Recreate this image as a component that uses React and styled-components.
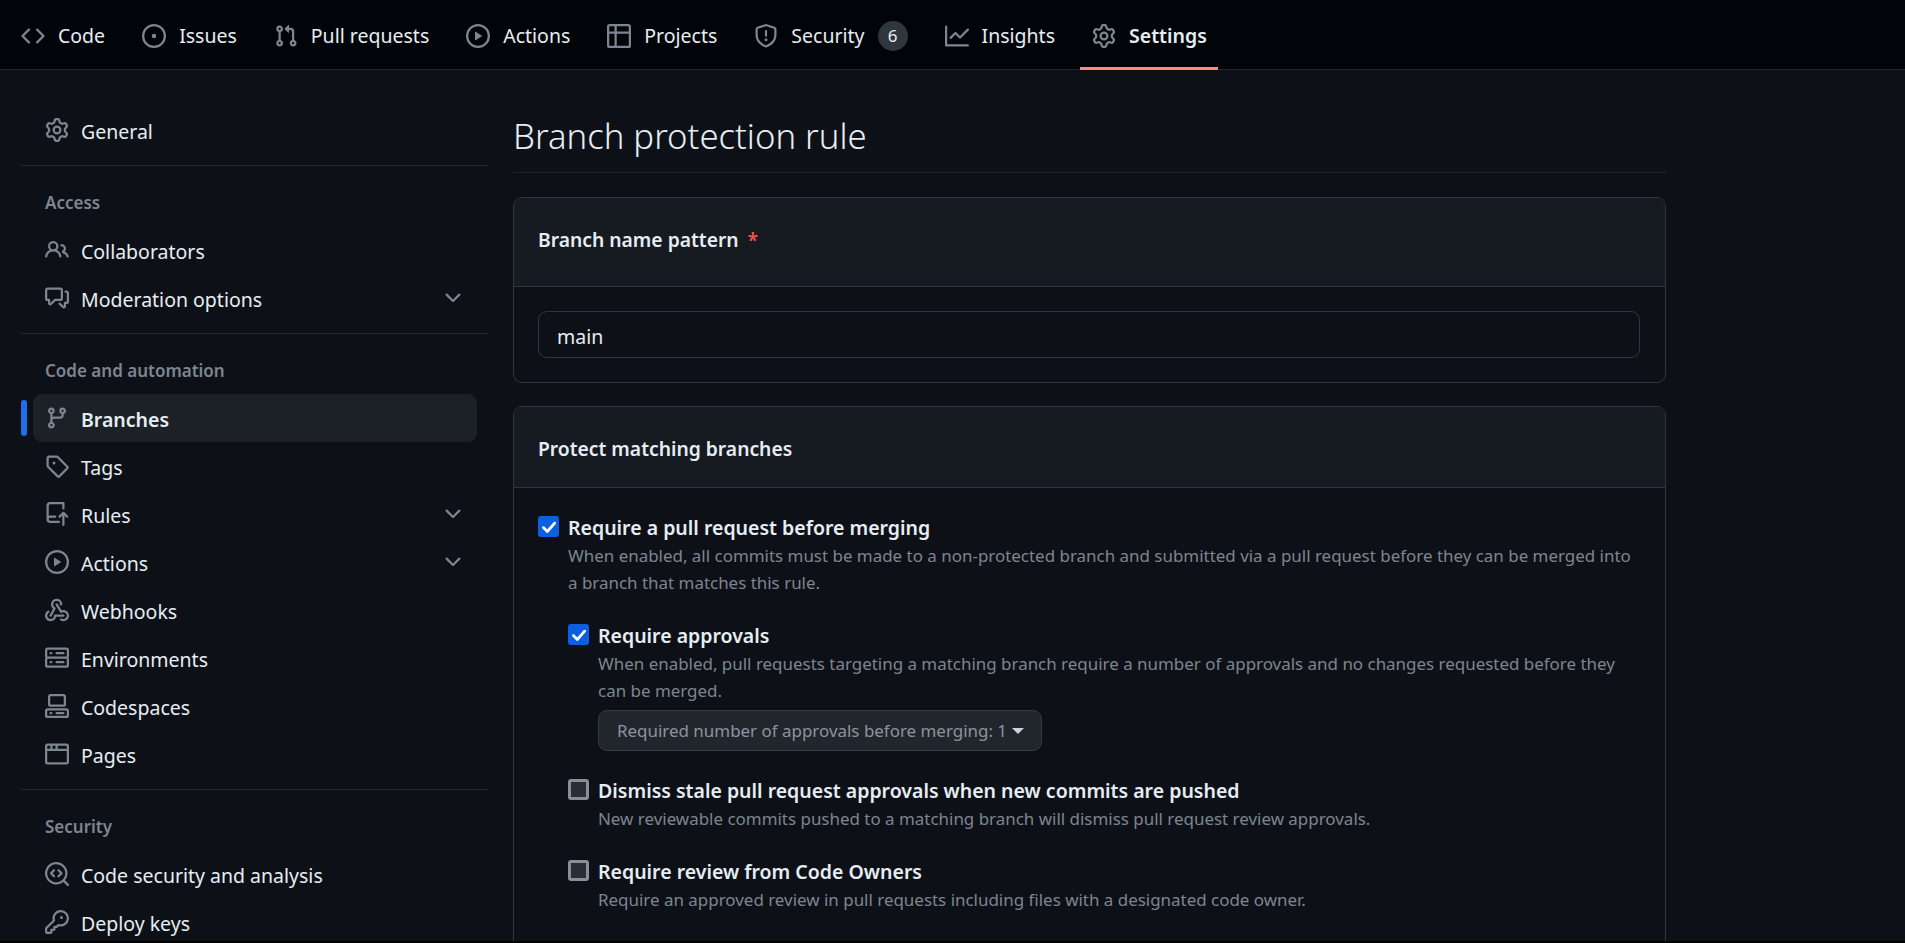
import React from 'react';
import styled, { createGlobalStyle } from 'styled-components';

const GlobalStyle = createGlobalStyle`
  html, body {
    margin: 0;
    height: 100%;
    overflow: hidden;
    background: #0d1117;
  }
  body {
    color: #e6edf3;
    font-family: "Noto Sans", "Open Sans", sans-serif;
    font-size: 19.5px;
  }
  * { box-sizing: border-box; }
`;

const Page = styled.div`
  height: 943px;
  overflow: hidden;
  border-bottom: 2px solid #000;
`;

const TabBar = styled.nav`
  display: flex;
  align-items: stretch;
  gap: 13px;
  height: 70px;
  padding-left: 9px;
  background: #010409;
  border-bottom: 1px solid #21262d;
`;

const Tab = styled.a`
  position: relative;
  display: flex;
  align-items: center;
  gap: 13px;
  padding: 2px 12px 0;
  font-weight: ${p => (p.$active ? 600 : 400)};
  color: #e6edf3;
  white-space: nowrap;
  svg { color: #7d8590; flex: none; }
  ${p => p.$active && `
    &::after {
      content: '';
      position: absolute;
      left: 0;
      right: 1px;
      bottom: -1px;
      height: 3px;
      background: #fd8c73;
    }
  `}
`;

const Counter = styled.span`
  display: flex;
  align-items: center;
  justify-content: center;
  width: 30px;
  height: 30px;
  border-radius: 15px;
  background: #30363d;
  font-size: 17px;
`;

const Layout = styled.div`
  display: flex;
  align-items: flex-start;
`;

const Sidebar = styled.aside`
  flex: none;
  width: 489px;
  padding: 36px 0 0 21px;
`;

const SideGroup = styled.ul`
  list-style: none;
  margin: 0;
  padding: 0 12px;
`;

const SideRow = styled.li`
  position: relative;
  display: flex;
  align-items: center;
  gap: 12px;
  height: 48px;
  padding: 0 12px;
  border-radius: 9px;
  color: #e6edf3;
  background: ${p => (p.$active ? '#1c2128' : 'transparent')};
  font-weight: ${p => (p.$active ? 600 : 400)};
  svg { color: #7d8590; flex: none; }
  ${p => p.$active && `
    &::before {
      content: '';
      position: absolute;
      left: -12px;
      top: 6px;
      width: 6px;
      height: 36px;
      border-radius: 9px;
      background: #1f6feb;
    }
  `}
`;

const RowLabel = styled.span`
  flex: 1;
  padding-top: 2px;
`;

const Divider = styled.hr`
  height: 1px;
  margin: 11px 0 0;
  border: 0;
  background: #21262d;
`;

const GroupTitle = styled.h3`
  margin: 0;
  height: 60px;
  padding: 25px 0 0 24px;
  font-size: 17px;
  line-height: 24px;
  font-weight: 600;
  color: #7d8590;
`;

const Main = styled.main`
  flex: none;
  width: 1153px;
  margin-left: 24px;
`;

const Heading = styled.div`
  height: 103px;
  padding-top: 39px;
  border-bottom: 1px solid #21262d;
`;

const Title = styled.h1`
  margin: 0;
  font-size: 34.7px;
  line-height: 54px;
  font-weight: 300;
  color: #e6edf3;
`;

const Panel = styled.section`
  margin-top: ${p => p.$top}px;
  border: 1px solid #30363d;
  border-radius: 9px;
  overflow: hidden;
`;

const PanelHead = styled.header`
  display: flex;
  align-items: center;
  gap: 9px;
  height: ${p => p.$height}px;
  padding: ${p => p.$pushDown}px 24px ${p => p.$pushUp}px;
  background: #161b22;
  border-bottom: 1px solid #30363d;
  font-size: 19.3px;
  font-weight: 600;
`;

const Required = styled.span`
  color: #f85149;
`;

const PanelBody = styled.div`
  padding: ${p => p.$top}px 25px ${p => p.$bottom}px 24px;
`;

const TextBox = styled.div`
  display: flex;
  align-items: center;
  height: 47px;
  padding: 3px 18px 0;
  border: 1px solid #30363d;
  border-radius: 9px;
  background: #0d1117;
`;

const Option = styled.div`
  display: grid;
  grid-template-columns: 21px 1fr;
  column-gap: 9px;
  margin: ${p => p.$top || 0}px 0 0 ${p => (p.$nested ? 30 : 0)}px;
`;

const Box = styled.span`
  display: flex;
  align-items: center;
  justify-content: center;
  width: 21px;
  height: 21px;
  border-radius: 3px;
  border: ${p => (p.$checked ? '0' : '3px solid #8b8d98')};
  background: ${p => (p.$checked ? '#0c5fe0' : '#2b2c34')};
  color: #fff;
`;

const OptionLabel = styled.div`
  height: 25px;
  font-weight: 600;
  line-height: 24px;
`;

const OptionHelp = styled.p`
  margin: 1px 0 2px;
  font-size: 16.95px;
  line-height: 27px;
  color: #7d8590;
`;

const SelectButton = styled.div`
  display: flex;
  align-items: center;
  gap: 5px;
  width: fit-content;
  height: 41px;
  margin-top: 6px;
  padding: 0 17px 0 18px;
  border: 1px solid #363b42;
  border-radius: 9px;
  background: #21262d;
  font-size: 16.95px;
  color: #8b949e;
  white-space: nowrap;
`;

const Caret = styled.span`
  width: 0;
  height: 0;
  border-left: 6px solid transparent;
  border-right: 6px solid transparent;
  border-top: 6px solid #c9d1d9;
`;

const paths = {
  code: ['m11.28 3.22 4.25 4.25a.75.75 0 0 1 0 1.06l-4.25 4.25a.749.749 0 0 1-1.275-.326.749.749 0 0 1 .215-.734L13.94 8l-3.72-3.72a.749.749 0 0 1 .326-1.275.749.749 0 0 1 .734.215Zm-6.56 0a.751.751 0 0 1 1.042.018.751.751 0 0 1 .018 1.042L2.06 8l3.72 3.72a.749.749 0 0 1-.326 1.275.749.749 0 0 1-.734-.215L.47 8.53a.75.75 0 0 1 0-1.06Z'],
  issue: ['M8 9.5a1.5 1.5 0 1 0 0-3 1.5 1.5 0 0 0 0 3Z', 'M8 0a8 8 0 1 1 0 16A8 8 0 0 1 8 0ZM1.5 8a6.5 6.5 0 1 0 13 0 6.5 6.5 0 0 0-13 0Z'],
  pull: ['M1.5 3.25a2.25 2.25 0 1 1 3 2.122v5.256a2.251 2.251 0 1 1-1.5 0V5.372A2.25 2.25 0 0 1 1.5 3.25Zm5.677-.177L9.573.677A.25.25 0 0 1 10 .854V2.5h1A2.5 2.5 0 0 1 13.5 5v5.628a2.251 2.251 0 1 1-1.5 0V5a1 1 0 0 0-1-1h-1v1.646a.25.25 0 0 1-.427.177L7.177 3.427a.25.25 0 0 1 0-.354ZM3.75 2.5a.75.75 0 1 0 0 1.5.75.75 0 0 0 0-1.5Zm0 9.5a.75.75 0 1 0 0 1.5.75.75 0 0 0 0-1.5Zm8.25.75a.75.75 0 1 0 1.5 0 .75.75 0 0 0-1.5 0Z'],
  play: ['M8 0a8 8 0 1 1 0 16A8 8 0 0 1 8 0ZM1.5 8a6.5 6.5 0 1 0 13 0 6.5 6.5 0 0 0-13 0Zm4.879-2.773 4.264 2.559a.25.25 0 0 1 0 .428l-4.264 2.559A.25.25 0 0 1 6 10.559V5.442a.25.25 0 0 1 .379-.215Z'],
  table: ['M0 1.75C0 .784.784 0 1.75 0h12.5C15.216 0 16 .784 16 1.75v12.5A1.75 1.75 0 0 1 14.25 16H1.75A1.75 1.75 0 0 1 0 14.25ZM6.5 6.5v8h7.75a.25.25 0 0 0 .25-.25V6.5Zm8-1.5V1.75a.25.25 0 0 0-.25-.25H6.5V5Zm-13 1.5v7.75c0 .138.112.25.25.25H5v-8ZM5 5V1.5H1.75a.25.25 0 0 0-.25.25V5Z'],
  shield: ['M7.467.133a1.748 1.748 0 0 1 1.066 0l5.25 1.68A1.75 1.75 0 0 1 15 3.48V7c0 1.566-.32 3.182-1.303 4.682-.983 1.498-2.585 2.813-5.032 3.855a1.697 1.697 0 0 1-1.33 0c-2.447-1.042-4.049-2.357-5.032-3.855C1.32 10.182 1 8.566 1 7V3.48a1.75 1.75 0 0 1 1.217-1.667Zm.61 1.429a.25.25 0 0 0-.153 0l-5.25 1.68a.25.25 0 0 0-.174.238V7c0 1.358.275 2.666 1.057 3.86.784 1.194 2.121 2.34 4.366 3.297a.196.196 0 0 0 .154 0c2.245-.956 3.582-2.104 4.366-3.298C13.225 9.666 13.5 8.36 13.5 7V3.48a.251.251 0 0 0-.174-.237l-5.25-1.68ZM8.75 4.75v3a.75.75 0 0 1-1.5 0v-3a.75.75 0 0 1 1.5 0ZM9 10.5a1 1 0 1 1-2 0 1 1 0 0 1 2 0Z'],
  graph: ['M1.5 1.75V13.5h13.75a.75.75 0 0 1 0 1.5H.75a.75.75 0 0 1-.75-.75V1.75a.75.75 0 0 1 1.5 0Zm14.28 2.53-5.25 5.25a.75.75 0 0 1-1.06 0L7 7.06 4.28 9.78a.751.751 0 0 1-1.042-.018.751.751 0 0 1-.018-1.042l3.25-3.25a.75.75 0 0 1 1.06 0L10 7.94l4.72-4.72a.751.751 0 0 1 1.042.018.751.751 0 0 1 .018 1.042Z'],
  gear: ['M8 0a8.2 8.2 0 0 1 .701.031C9.444.095 9.99.645 10.16 1.29l.288 1.107c.018.066.079.158.212.224.231.114.454.243.668.386.123.082.233.09.299.071l1.103-.303c.644-.176 1.392.021 1.82.63.27.385.506.792.704 1.218.315.675.111 1.422-.364 1.891l-.814.806c-.049.048-.098.147-.088.294.016.257.016.515 0 .772-.01.147.038.246.088.294l.814.806c.475.469.679 1.216.364 1.891a7.977 7.977 0 0 1-.704 1.217c-.428.61-1.176.807-1.82.63l-1.102-.302c-.067-.019-.177-.011-.3.071a5.909 5.909 0 0 1-.668.386c-.133.066-.194.158-.211.224l-.29 1.106c-.168.646-.715 1.196-1.458 1.26a8.006 8.006 0 0 1-1.402 0c-.743-.064-1.289-.614-1.458-1.26l-.289-1.106c-.018-.066-.079-.158-.212-.224a5.738 5.738 0 0 1-.668-.386c-.123-.082-.233-.09-.299-.071l-1.103.303c-.644.176-1.392-.021-1.82-.63a8.12 8.12 0 0 1-.704-1.218c-.315-.675-.111-1.422.363-1.891l.815-.806c.05-.048.098-.147.088-.294a6.214 6.214 0 0 1 0-.772c.01-.147-.038-.246-.088-.294l-.815-.806C.635 6.045.431 5.298.746 4.623a7.92 7.92 0 0 1 .704-1.217c.428-.61 1.176-.807 1.82-.63l1.102.302c.067.019.177.011.3-.071.214-.143.437-.272.668-.386.133-.066.194-.158.211-.224l.29-1.106C6.009.645 6.556.095 7.299.03 7.53.01 7.764 0 8 0Zm-.571 1.525c-.036.003-.108.036-.137.146l-.289 1.105c-.147.561-.549.967-.998 1.189-.173.086-.34.183-.5.29-.417.278-.97.423-1.529.27l-1.103-.303c-.109-.03-.175.016-.195.045-.22.312-.412.644-.573.99-.014.031-.021.11.059.19l.815.806c.411.406.562.957.53 1.456a4.709 4.709 0 0 0 0 .582c.032.499-.119 1.05-.53 1.456l-.815.806c-.081.08-.073.159-.059.19.162.346.353.677.573.989.02.03.085.076.195.046l1.102-.303c.56-.153 1.113-.008 1.53.27.161.107.328.204.501.29.447.222.85.629.997 1.189l.289 1.105c.029.109.101.143.137.146a6.6 6.6 0 0 0 1.142 0c.036-.003.108-.036.137-.146l.289-1.105c.147-.561.549-.967.998-1.189.173-.086.34-.183.5-.29.417-.278.97-.423 1.529-.27l1.103.303c.109.029.175-.016.195-.045.22-.313.411-.644.573-.99.014-.031.021-.11-.059-.19l-.815-.806c-.411-.406-.562-.957-.53-1.456a4.709 4.709 0 0 0 0-.582c-.032-.499.119-1.05.53-1.456l.815-.806c.081-.08.073-.159.059-.19a6.464 6.464 0 0 0-.573-.989c-.02-.03-.085-.076-.195-.046l-1.102.303c-.56.153-1.113.008-1.53-.27a4.44 4.44 0 0 0-.501-.29c-.447-.222-.85-.629-.997-1.189l-.289-1.105c-.029-.11-.101-.143-.137-.146a6.6 6.6 0 0 0-1.142 0ZM11 8a3 3 0 1 1-6 0 3 3 0 0 1 6 0ZM9.5 8a1.5 1.5 0 1 0-3.001.001A1.5 1.5 0 0 0 9.5 8Z'],
  people: ['M2 5.5a3.5 3.5 0 1 1 5.898 2.549 5.508 5.508 0 0 1 3.034 4.084.75.75 0 1 1-1.482.235 4 4 0 0 0-7.9 0 .75.75 0 0 1-1.482-.236A5.507 5.507 0 0 1 3.102 8.05 3.493 3.493 0 0 1 2 5.5ZM11 4a3.001 3.001 0 0 1 2.22 5.018 5.01 5.01 0 0 1 2.56 3.012.749.749 0 0 1-.885.954.752.752 0 0 1-.549-.514 3.507 3.507 0 0 0-2.522-2.372.75.75 0 0 1-.574-.73v-.352a.75.75 0 0 1 .416-.672A1.5 1.5 0 0 0 11 5.5.75.75 0 0 1 11 4Zm-5.5-.5a2 2 0 1 0-.001 3.999A2 2 0 0 0 5.5 3.5Z'],
  discussion: ['M1.75 1h8.5c.966 0 1.75.784 1.75 1.75v5.5A1.75 1.75 0 0 1 10.25 10H7.061l-2.574 2.573A1.458 1.458 0 0 1 2 11.543V10h-.25A1.75 1.75 0 0 1 0 8.25v-5.5C0 1.784.784 1 1.75 1ZM1.5 2.75v5.5c0 .138.112.25.25.25h1a.75.75 0 0 1 .75.75v2.19l2.72-2.72a.749.749 0 0 1 .53-.22h3.5a.25.25 0 0 0 .25-.25v-5.5a.25.25 0 0 0-.25-.25h-8.5a.25.25 0 0 0-.25.25Zm13 2a.25.25 0 0 0-.25-.25h-.5a.75.75 0 0 1 0-1.5h.5c.966 0 1.75.784 1.75 1.75v5.5A1.75 1.75 0 0 1 14.25 12H14v1.543a1.458 1.458 0 0 1-2.487 1.03L9.22 12.28a.749.749 0 0 1 .326-1.275.749.749 0 0 1 .734.215l2.22 2.22v-2.19a.75.75 0 0 1 .75-.75h1a.25.25 0 0 0 .25-.25Z'],
  branch: ['M9.5 3.25a2.25 2.25 0 1 1 3 2.122V6A2.5 2.5 0 0 1 10 8.5H6a1 1 0 0 0-1 1v1.128a2.251 2.251 0 1 1-1.5 0V5.372a2.25 2.25 0 1 1 1.5 0v1.836A2.493 2.493 0 0 1 6 7h4a1 1 0 0 0 1-1v-.628A2.25 2.25 0 0 1 9.5 3.25Zm-6 0a.75.75 0 1 0 1.5 0 .75.75 0 0 0-1.5 0Zm8.25-.75a.75.75 0 1 0 0 1.5.75.75 0 0 0 0-1.5ZM4.25 12a.75.75 0 1 0 0 1.5.75.75 0 0 0 0-1.5Z'],
  tag: ['M1 7.775V2.75C1 1.784 1.784 1 2.75 1h5.025c.464 0 .91.184 1.238.513l6.25 6.25a1.75 1.75 0 0 1 0 2.474l-5.026 5.026a1.75 1.75 0 0 1-2.474 0l-6.25-6.25A1.752 1.752 0 0 1 1 7.775Zm1.5 0c0 .066.026.13.073.177l6.25 6.25a.25.25 0 0 0 .354 0l5.025-5.025a.25.25 0 0 0 0-.354l-6.25-6.25a.25.25 0 0 0-.177-.073H2.75a.25.25 0 0 0-.25.25ZM6 5a1 1 0 1 1 0 2 1 1 0 0 1 0-2Z'],
  repoPush: ['M1 2.5A2.5 2.5 0 0 1 3.5 0h8.75a.75.75 0 0 1 .75.75v3.5a.75.75 0 0 1-1.5 0V1.5h-8a1 1 0 0 0-1 1v6.708A2.493 2.493 0 0 1 3.5 9h3.25a.75.75 0 0 1 0 1.5H3.5a1 1 0 0 0 0 2h5.75a.75.75 0 0 1 0 1.5H3.5A2.5 2.5 0 0 1 1 11.5Zm13.23 7.79h-.001l-1.224-1.224v6.184a.75.75 0 0 1-1.5 0V9.066L10.28 10.29a.75.75 0 0 1-1.06-1.061l2.505-2.504a.75.75 0 0 1 1.06 0L15.29 9.23a.751.751 0 0 1-.018 1.042.751.751 0 0 1-1.042.018Z'],
  webhook: ['M5.5 4.25a2.25 2.25 0 0 1 4.5 0 .75.75 0 0 0 1.5 0 3.75 3.75 0 1 0-6.14 2.889l-2.272 4.258a.75.75 0 0 0 1.324.706L7 7.25a.75.75 0 0 0-.309-1.015A2.25 2.25 0 0 1 5.5 4.25Z', 'M7.364 3.607a.75.75 0 0 1 1.03.257l2.608 4.349a3.75 3.75 0 1 1-.628 6.785.75.75 0 0 1 .752-1.299 2.25 2.25 0 1 0-.033-3.88.75.75 0 0 1-1.03-.256L7.107 4.636a.75.75 0 0 1 .257-1.03Z', 'M2.9 8.776A.75.75 0 0 1 2.625 9.8 2.25 2.25 0 1 0 6 11.75a.75.75 0 0 1 .75-.751h5.5a.75.75 0 0 1 0 1.5H7.425a3.751 3.751 0 1 1-5.55-3.998.75.75 0 0 1 1.024.274Z'],
  server: ['M1.75 1h12.5c.966 0 1.75.784 1.75 1.75v4c0 .372-.116.717-.314 1 .198.283.314.628.314 1v4a1.75 1.75 0 0 1-1.75 1.75H1.75A1.75 1.75 0 0 1 0 12.75v-4c0-.358.109-.707.314-1a1.739 1.739 0 0 1-.314-1v-4C0 1.784.784 1 1.75 1ZM1.5 2.75v4c0 .138.112.25.25.25h12.5a.25.25 0 0 0 .25-.25v-4a.25.25 0 0 0-.25-.25H1.75a.25.25 0 0 0-.25.25Zm.25 5.75a.25.25 0 0 0-.25.25v4c0 .138.112.25.25.25h12.5a.25.25 0 0 0 .25-.25v-4a.25.25 0 0 0-.25-.25ZM7 4.75A.75.75 0 0 1 7.75 4h4.5a.75.75 0 0 1 0 1.5h-4.5A.75.75 0 0 1 7 4.75ZM7.75 10h4.5a.75.75 0 0 1 0 1.5h-4.5a.75.75 0 0 1 0-1.5ZM3 4.75A.75.75 0 0 1 3.75 4h.5a.75.75 0 0 1 0 1.5h-.5A.75.75 0 0 1 3 4.75ZM3.75 10h.5a.75.75 0 0 1 0 1.5h-.5a.75.75 0 0 1 0-1.5Z'],
  codespaces: ['M0 11.25c0-.966.784-1.75 1.75-1.75h12.5c.966 0 1.75.784 1.75 1.75v3A1.75 1.75 0 0 1 14.25 16H1.75A1.75 1.75 0 0 1 0 14.25Zm2-9.5C2 .784 2.784 0 3.75 0h8.5C13.216 0 14 .784 14 1.75v5a1.75 1.75 0 0 1-1.75 1.75h-8.5A1.75 1.75 0 0 1 2 6.75Zm1.75-.25a.25.25 0 0 0-.25.25v5c0 .138.112.25.25.25h8.5a.25.25 0 0 0 .25-.25v-5a.25.25 0 0 0-.25-.25Zm-2 9.5a.25.25 0 0 0-.25.25v3c0 .138.112.25.25.25h12.5a.25.25 0 0 0 .25-.25v-3a.25.25 0 0 0-.25-.25Z', 'M7 12.75a.75.75 0 0 1 .75-.75h4.5a.75.75 0 0 1 0 1.5h-4.5a.75.75 0 0 1-.75-.75Zm-4 0a.75.75 0 0 1 .75-.75h.5a.75.75 0 0 1 0 1.5h-.5a.75.75 0 0 1-.75-.75Z'],
  browser: ['M0 2.75C0 1.784.784 1 1.75 1h12.5c.966 0 1.75.784 1.75 1.75v10.5A1.75 1.75 0 0 1 14.25 15H1.75A1.75 1.75 0 0 1 0 13.25ZM14.5 6h-13v7.25c0 .138.112.25.25.25h12.5a.25.25 0 0 0 .25-.25Zm-6-3.5v2h6V2.75a.25.25 0 0 0-.25-.25ZM5 2.5v2h2v-2Zm-3.25 0a.25.25 0 0 0-.25.25V4.5h2v-2Z'],
  codescan: ['M8.47 4.97a.75.75 0 0 0 0 1.06L9.94 7.5 8.47 8.97a.75.75 0 1 0 1.06 1.06l2-2a.75.75 0 0 0 0-1.06l-2-2a.75.75 0 0 0-1.06 0ZM6.53 6.03a.75.75 0 0 0-1.06-1.06l-2 2a.75.75 0 0 0 0 1.06l2 2a.75.75 0 1 0 1.06-1.06L5.06 7.5l1.47-1.47Z', 'M12.246 13.307a7.501 7.501 0 1 1 1.06-1.06l2.474 2.473a.749.749 0 0 1-.326 1.275.749.749 0 0 1-.734-.215ZM1.5 7.5a6.002 6.002 0 0 0 3.608 5.504 6.002 6.002 0 0 0 6.486-1.117.748.748 0 0 1 .292-.293A6 6 0 1 0 1.5 7.5Z'],
  key: ['M10.5 0a5.499 5.499 0 1 1-1.288 10.848l-.932.932a.749.749 0 0 1-.53.22H7v.75a.749.749 0 0 1-.22.53l-.5.5a.749.749 0 0 1-.53.22H5v.75a.749.749 0 0 1-.22.53l-.5.5a.749.749 0 0 1-.53.22h-2A1.75 1.75 0 0 1 0 14.25v-2c0-.199.079-.389.22-.53l4.932-4.932A5.5 5.5 0 0 1 10.5 0Zm-4 5.5c-.001.431.069.86.205 1.269a.75.75 0 0 1-.181.768L1.5 12.56v1.69c0 .138.112.25.25.25h1.69l.06-.06v-1.19a.75.75 0 0 1 .75-.75h1.19l.06-.06v-1.19a.75.75 0 0 1 .75-.75h1.19l1.023-1.025a.75.75 0 0 1 .768-.18A4 4 0 1 0 6.5 5.5ZM11 6a1 1 0 1 1 0-2 1 1 0 0 1 0 2Z'],
  chevron: ['M12.78 5.22a.749.749 0 0 1 0 1.06l-4.25 4.25a.749.749 0 0 1-1.06 0L3.22 6.28a.749.749 0 1 1 1.06-1.06L8 8.939l3.72-3.719a.749.749 0 0 1 1.06 0Z'],
};

const Icon = ({ name }) => (
  <svg width={24} height={24} viewBox="0 0 16 16" fill="currentColor">
    {paths[name].map(d => <path key={d} d={d} />)}
  </svg>
);

const tabs = [
  { label: 'Code', icon: 'code' },
  { label: 'Issues', icon: 'issue' },
  { label: 'Pull requests', icon: 'pull' },
  { label: 'Actions', icon: 'play' },
  { label: 'Projects', icon: 'table' },
  { label: 'Security', icon: 'shield', count: 6 },
  { label: 'Insights', icon: 'graph' },
  { label: 'Settings', icon: 'gear', active: true },
];

const sideGroups = [
  { items: [{ label: 'General', icon: 'gear' }] },
  {
    title: 'Access',
    items: [
      { label: 'Collaborators', icon: 'people' },
      { label: 'Moderation options', icon: 'discussion', more: true },
    ],
  },
  {
    title: 'Code and automation',
    items: [
      { label: 'Branches', icon: 'branch', active: true },
      { label: 'Tags', icon: 'tag' },
      { label: 'Rules', icon: 'repoPush', more: true },
      { label: 'Actions', icon: 'play', more: true },
      { label: 'Webhooks', icon: 'webhook' },
      { label: 'Environments', icon: 'server' },
      { label: 'Codespaces', icon: 'codespaces' },
      { label: 'Pages', icon: 'browser' },
    ],
  },
  {
    title: 'Security',
    items: [
      { label: 'Code security and analysis', icon: 'codescan' },
      { label: 'Deploy keys', icon: 'key' },
    ],
  },
];

const Check = ({ on }) => (
  <Box $checked={on}>
    {on && (
      <svg width={18} height={18} viewBox="0 0 16 16" fill="none" stroke="currentColor" strokeWidth={2.4} strokeLinecap="round" strokeLinejoin="round">
        <polyline points="3 8.5 6.5 12 13 4.5" />
      </svg>
    )}
  </Box>
);

const App = () => (
  <Page>
    <GlobalStyle />
    <TabBar>
      {tabs.map(({ label, icon, count, active }) => (
        <Tab key={label} $active={active}>
          <Icon name={icon} />
          {label}
          {count && <Counter>{count}</Counter>}
        </Tab>
      ))}
    </TabBar>
    <Layout>
      <Sidebar>
        {sideGroups.map((group, i) => (
          <React.Fragment key={i}>
            {i > 0 && <Divider />}
            {group.title && <GroupTitle>{group.title}</GroupTitle>}
            <SideGroup>
              {group.items.map(({ label, icon, more, active }) => (
                <SideRow key={label} $active={active}>
                  <Icon name={icon} />
                  <RowLabel>{label}</RowLabel>
                  {more && <Icon name="chevron" />}
                </SideRow>
              ))}
            </SideGroup>
          </React.Fragment>
        ))}
      </Sidebar>
      <Main>
        <Heading>
          <Title>Branch protection rule</Title>
        </Heading>
        <Panel $top={24}>
          <PanelHead $height={89} $pushDown={0} $pushUp={5}>
            Branch name pattern <Required>*</Required>
          </PanelHead>
          <PanelBody $top={24} $bottom={24}>
            <TextBox>main</TextBox>
          </PanelBody>
        </Panel>
        <Panel $top={23}>
          <PanelHead $height={81} $pushDown={2} $pushUp={0}>Protect matching branches</PanelHead>
          <PanelBody $top={28} $bottom={80}>
            <Option>
              <Check on />
              <OptionLabel>Require a pull request before merging</OptionLabel>
              <span />
              <OptionHelp>
                When enabled, all commits must be made to a non-protected branch and submitted via a pull request before they can be merged into a branch that matches this rule.
              </OptionHelp>
            </Option>
            <Option $nested $top={26}>
              <Check on />
              <OptionLabel>Require approvals</OptionLabel>
              <span />
              <div>
                <OptionHelp>
                  When enabled, pull requests targeting a matching branch require a number of approvals and no changes requested before they can be merged.
                </OptionHelp>
                <SelectButton>
                  Required number of approvals before merging: 1
                  <Caret />
                </SelectButton>
              </div>
            </Option>
            <Option $nested $top={28}>
              <Check />
              <OptionLabel>Dismiss stale pull request approvals when new commits are pushed</OptionLabel>
              <span />
              <OptionHelp>New reviewable commits pushed to a matching branch will dismiss pull request review approvals.</OptionHelp>
            </Option>
            <Option $nested $top={26}>
              <Check />
              <OptionLabel>Require review from Code Owners</OptionLabel>
              <span />
              <OptionHelp>Require an approved review in pull requests including files with a designated code owner.</OptionHelp>
            </Option>
          </PanelBody>
        </Panel>
      </Main>
    </Layout>
  </Page>
);

export default App;
